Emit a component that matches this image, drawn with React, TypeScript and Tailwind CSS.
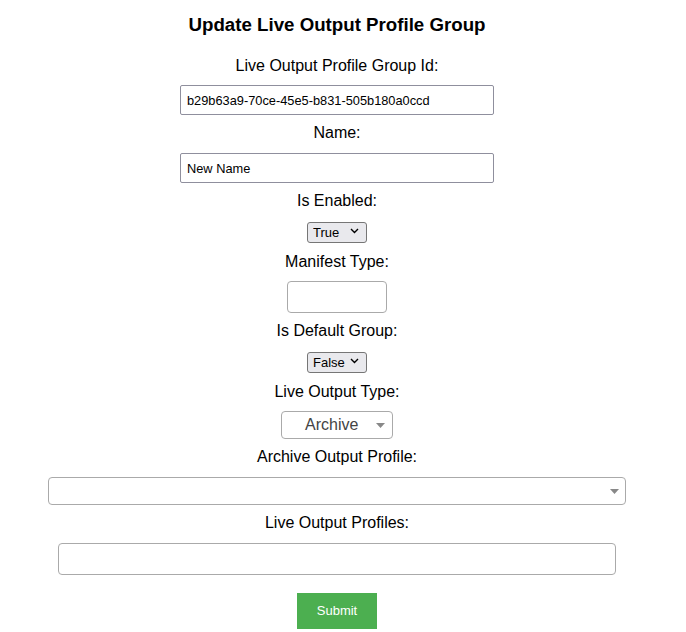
import { useState } from "react";

const font = { fontFamily: '"Liberation Sans", Arial, sans-serif' };

function Label({ children, className = "" }: { children: string; className?: string }) {
  return (
    <label className={`block text-[16px] leading-[18px] text-black ${className}`}>{children}</label>
  );
}

// small native-looking select (True / False)
function SmallSelect({ value, options, className = "" }: { value: string; options: string[]; className?: string }) {
  const [v, setV] = useState(value);
  return (
    <div className={`relative w-[60px] h-[21px] ${className}`}>
      <select
        value={v}
        onChange={(e) => setV(e.target.value)}
        className="appearance-none w-full h-full rounded-[3px] border border-[#767676] bg-[#e9e9ed] pl-[5px] text-[13px] text-black outline-none"
        style={font}
      >
        {options.map((o) => (
          <option key={o}>{o}</option>
        ))}
      </select>
      <svg className="pointer-events-none absolute right-[8px] top-[8px]" width="9" height="6" viewBox="0 0 9 6">
        <path d="M1 1l3.5 3.5L8 1" stroke="#000" strokeWidth="1.4" fill="none" />
      </svg>
    </div>
  );
}

function Caret({ className = "" }: { className?: string }) {
  return (
    <svg className={`pointer-events-none absolute ${className}`} width="9" height="5" viewBox="0 0 9 5">
      <path d="M0 0h9L4.5 5z" fill="#888" />
    </svg>
  );
}

export default function App() {
  const [name, setName] = useState("New Name");
  const [manifest, setManifest] = useState("");
  const [profiles, setProfiles] = useState("");

  return (
    <div className="w-[674px] h-[632px] bg-white flex flex-col items-center" style={font}>
      <h2 className="mt-[13px] text-[18.7px] leading-[24px] font-bold text-black">Update Live Output Profile Group</h2>

      <Label className="mt-[20px]">Live Output Profile Group Id:</Label>
      <input
        readOnly
        value="b29b63a9-70ce-45e5-b831-505b180a0ccd"
        className="mt-[10px] w-[314px] h-[30px] rounded-[2px] border border-[#8f8f9d] px-[6px] text-[12.8px] text-black outline-none"
        style={font}
      />

      <Label className="mt-[9px]">Name:</Label>
      <input
        value={name}
        onChange={(e) => setName(e.target.value)}
        className="mt-[11px] w-[314px] h-[30px] rounded-[2px] border border-[#8f8f9d] px-[6px] text-[12.8px] text-black outline-none"
        style={font}
      />

      <Label className="mt-[9px]">Is Enabled:</Label>
      <SmallSelect value="True" options={["True", "False"]} className="mt-[10px]" />

      <Label className="mt-[12px]">Manifest Type:</Label>
      <input
        value={manifest}
        onChange={(e) => setManifest(e.target.value)}
        className="mt-[10px] w-[100px] h-[32px] rounded-[4px] border border-[#aaa] px-[6px] text-[14px] outline-none"
        style={font}
      />

      <Label className="mt-[9px]">Is Default Group:</Label>
      <SmallSelect value="False" options={["True", "False"]} className="mt-[10px]" />

      <Label className="mt-[12px]">Live Output Type:</Label>
      <div className="relative mt-[10px] w-[112px] h-[28px] rounded-[4px] border border-[#aaa] bg-white">
        <span className="absolute left-[23px] top-[4px] text-[16px] leading-[18px] text-[#444]">Archive</span>
        <Caret className="right-[7px] top-[11px]" />
      </div>

      <Label className="mt-[9px]">Archive Output Profile:</Label>
      <div className="relative mt-[11px] w-[578px] h-[28px] rounded-[4px] border border-[#aaa] bg-white">
        <Caret className="right-[6px] top-[11px]" />
      </div>

      <Label className="mt-[9px]">Live Output Profiles:</Label>
      <input
        value={profiles}
        onChange={(e) => setProfiles(e.target.value)}
        className="mt-[11px] w-[558px] h-[32px] rounded-[4px] border border-[#aaa] px-[6px] text-[14px] outline-none"
        style={font}
      />

      <button
        className="mt-[18px] w-[80px] h-[36px] bg-[#4caf50] text-white text-[13px]"
        style={font}
      >
        Submit
      </button>
    </div>
  );
}
